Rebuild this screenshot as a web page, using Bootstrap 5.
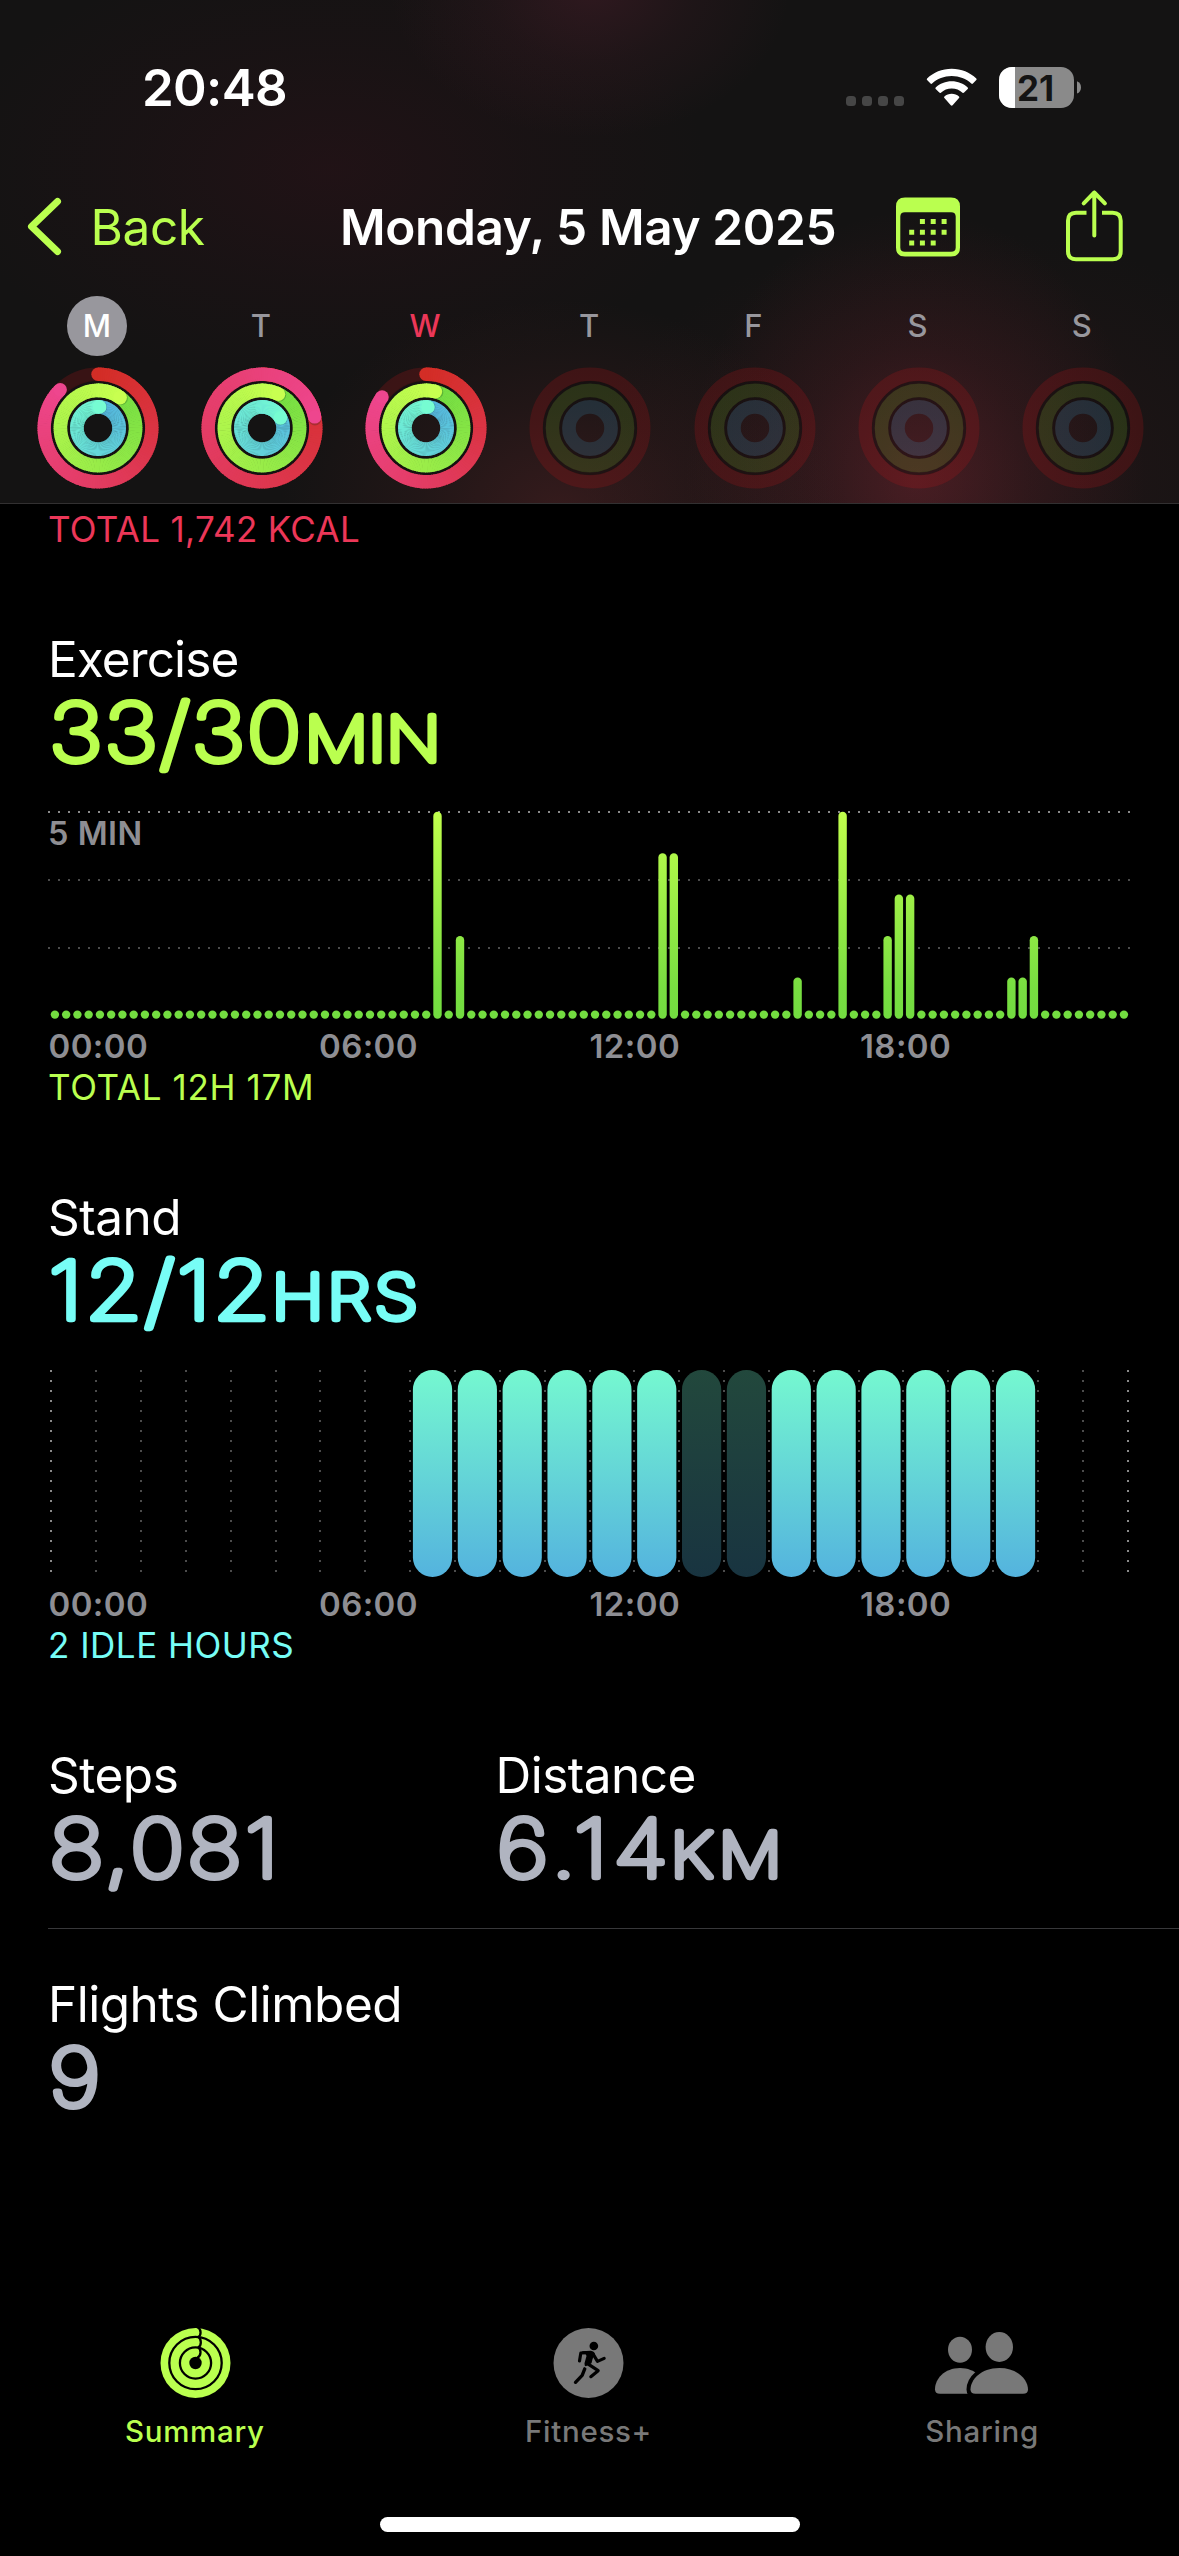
<!DOCTYPE html>
<html lang="en" data-bs-theme="dark">
<head>
<meta charset="utf-8">
<meta name="viewport" content="width=device-width, initial-scale=1">
<title>Fitness – Summary</title>
<link href="https://cdn.jsdelivr.net/npm/bootstrap@5.3.0/dist/css/bootstrap.min.css" rel="stylesheet">
<style>
  :root { --lime:#baff4f; --aqua:#77fdf6; --rose:#ec3758; --dim:#8e8e93; }
  body { width:1179px; height:2556px; background:#000; color:#fff; font-family:Inter,"Liberation Sans",sans-serif; overflow:hidden; }
  svg { display:block; flex:none; overflow:visible; }
  .top-pane { height:504px; border-bottom:1px solid #323031;
    background:
      radial-gradient(200px 150px at 590px -12px, rgba(125,40,65,.26), rgba(125,40,65,.1) 50%, transparent),
      radial-gradient(380px 220px at 330px 170px, rgba(90,15,35,.18), rgba(90,15,35,.08) 50%, transparent),
      radial-gradient(280px 210px at 560px 510px, rgba(130,45,50,.3), rgba(130,45,50,.12) 50%, transparent),
      radial-gradient(230px 270px at 915px 480px, rgba(150,45,60,.33), rgba(140,40,55,.14) 50%, transparent),
      radial-gradient(380px 250px at 960px 480px, rgba(80,30,35,.24), transparent),
      #141313; }
  .status-row { height:176px; padding-left:142px; }
  .clock { width:704px; font-size:51px; font-weight:600; letter-spacing:-.66px; line-height:60px; }
  .title-row { height:101px; padding-left:28px; color:var(--lime); }
  .back-link { width:312px; color:var(--lime); font-size:49.5px; line-height:60px; letter-spacing:-.4px; }
  .day-title { width:556px; color:#fff; font-size:49.5px; font-weight:600; line-height:60px; letter-spacing:-.36px; white-space:nowrap; }
  .week-row { padding:19px 14px 0 16px; }
  .day-letter { width:60px; height:60px; margin-left:-2.500px; font-size:31px; font-weight:500; color:#98979d; }
  .day-letter.chosen { background:#98979d; color:#fff; }
  .day-letter.today { color:var(--rose); }
  .content-pane { padding:5px 0 0 48px; }
  .foot-line { font-size:35px; line-height:40px; }
  .metric-name { font-size:49.5px; font-weight:400; line-height:60px; letter-spacing:-.5px; margin:0; }
  .block-gap { margin-top:80px; }
  .figure-text { font-family:Inter,sans-serif; font-weight:100; font-size:79.500px; stroke-width:6.500px; stroke-linejoin:round; stroke-linecap:round; }
  .figure-text .unit { font-size:61.500px; }
  .plot { margin:32px 0 8px; }
  .tick-row { padding-left:.5px; color:var(--dim); font-size:33px; font-weight:600; line-height:38px; padding-bottom:2px; letter-spacing:.4px; }
  .tick-row span { width:270.5px; }
  .lime { color:var(--lime); } .aqua { color:var(--aqua); } .rose { color:var(--rose); }
  .rule-line { height:1px; background:#38383a; margin:33px 0 45px; }
  .tab-pane-bar { height:246px; padding-top:13px; }
  .tab-items { margin-left:-2px; }
  .tab-name { font-size:29.5px; font-weight:500; line-height:40px; letter-spacing:.7px; margin-top:8px; }
  .tab-off { color:#787878; }
  .home-bar { width:420px; height:15px; border-radius:8px; background:#fff; margin:66px auto 0; }
</style>
<script src="https://cdn.jsdelivr.net/npm/bootstrap@5.3.0/dist/js/bootstrap.bundle.min.js"></script>
</head>
<body class="d-flex flex-column m-0">

<header class="top-pane flex-shrink-0">
  <div class="status-row d-flex align-items-center">
    <div class="clock"><span class="d-block">20:48</span></div>
    <svg width="240" height="44" viewBox="0 0 240 44">
      <g fill="#464646"><rect x="0" y="30" width="10" height="10" rx="3.5"/><rect x="16" y="30" width="10" height="10" rx="3.5"/><rect x="32" y="30" width="10" height="10" rx="3.5"/><rect x="48" y="30" width="10" height="10" rx="3.5"/></g>
      <g fill="#fff">
        <path d="M105.7 2.7C115.300 2.700 124 6.400 130.300 12.400Q131.100 13.200 130.300 14L126.900 17.500Q126.100 18.300 125.300 17.500C120.200 12.800 113.300 10 105.700 10S91.200 12.800 86.100 17.500Q85.300 18.300 84.500 17.500L81.100 14Q80.300 13.200 81.100 12.400C87.400 6.400 96.100 2.700 105.700 2.700Z"/>
        <path d="M105.700 15.200C111.900 15.200 117.500 17.500 121.700 21.400Q122.500 22.200 121.700 23L118.100 26.600Q117.300 27.400 116.500 26.700C113.600 24.100 109.900 22.500 105.700 22.500S97.800 24.100 94.900 26.700Q94.100 27.400 93.300 26.600L89.700 23Q88.900 22.200 89.700 21.400C93.900 17.500 99.500 15.200 105.700 15.200Z"/>
        <path d="M105.700 27.800C108.500 27.800 111 28.700 113 30.400Q113.800 31.200 113 32L106.600 39.300Q105.700 40.200 104.800 39.300L98.400 32Q97.600 31.200 98.400 30.400C100.400 28.700 102.900 27.800 105.700 27.800Z"/>
      </g>
      <clipPath id="cell"><rect x="153" y="1" width="75" height="41" rx="13"/></clipPath>
      <g clip-path="url(#cell)"><rect x="153" y="1" width="75" height="41" fill="#8a8a8a"/><rect x="153" y="1" width="16" height="41" fill="#fff"/></g>
      <path d="M231 15.300C233.500 16.300 235 18.500 235 21.400S233.500 26.500 231 27.500Z" fill="#8a8a8a"/>
      <text x="171" y="34.600" font-size="35" font-weight="700" fill="#141414">21</text>
    </svg>
  </div>

  <div class="title-row d-flex align-items-center">
    <a href="#" class="back-link d-flex align-items-center text-decoration-none">
      <svg width="33" height="57" viewBox="0 0 33 57" fill="none" stroke="currentColor" stroke-width="7" stroke-linecap="round" stroke-linejoin="round"><path d="M29.500 3.500 3.500 28.500 29.500 53.500"/></svg>
      <span style="margin-left:29.5px">Back</span>
    </a>
    <h1 class="day-title m-0">Monday, 5 May 2025</h1>
    <svg width="64" height="60" viewBox="0 0 64 60" fill="currentColor">
      <path fill-rule="evenodd" d="M9 .500H55Q64 .500 64 9.500V50.500Q64 59.500 55 59.500H9Q0 59.500 0 50.500V9.500Q0 .500 9 .500ZM9 15.200Q4.300 15.200 4.300 19.500V50.500Q4.300 54.800 9 54.800H55Q59.700 54.800 59.700 50.500V19.500Q59.700 15.200 55 15.200Z"/>
      <path d="M23.900 22h5v5h-5zM34.700 22h5v5h-5zM45.600 22h5v5h-5zM13.200 32.700h5v5h-5zM23.900 32.700h5v5h-5zM34.700 32.700h5v5h-5zM45.600 32.700h5v5h-5zM13.200 43.400h5v5h-5zM23.900 43.400h5v5h-5zM34.700 43.400h5v5h-5z"/>
    </svg>
    <svg style="margin-left:106px" width="57" height="74" viewBox="0 2 57 74" fill="none" stroke="currentColor" stroke-width="4">
      <path d="M20.500 24.800H10Q2 24.800 2 32.800V63.300Q2 71.300 10 71.300H46.700Q54.700 71.300 54.700 63.300V32.800Q54.700 24.800 46.700 24.800H36"/>
      <path stroke-linecap="round" stroke-linejoin="round" d="M28.300 47.500V4.500M17.700 15.300 28.300 4.500 38.900 15.300"/>
    </svg>
  </div>

  <div class="week-row d-flex" id="week"></div>
</header>

<main class="content-pane flex-grow-1">
  <div class="foot-line rose" style="letter-spacing:.3px">TOTAL 1,742 KCAL</div>

  <section class="block-gap">
    <h2 class="metric-name" style="letter-spacing:-.9px">Exercise</h2>
    <svg width="500" height="90"><g transform="scale(1.15 1)" class="lime" fill="currentColor" stroke="currentColor">
      <text class="figure-text" y="72"><tspan x="1" letter-spacing="1.900">33/30</tspan><tspan class="unit" x="223.200" letter-spacing=".300">MIN</tspan></text></g></svg>
    <svg class="plot" id="exercisePlot" width="1131" height="208">
      <defs><linearGradient id="limeFade" gradientUnits="userSpaceOnUse" x1="0" y1="0" x2="0" y2="208"><stop offset="0" stop-color="#c1ff4c"/><stop offset=".850" stop-color="#78de41"/><stop offset="1" stop-color="#72dc40"/></linearGradient></defs>
      <text x="0" y="34" font-size="32.500" font-weight="600" letter-spacing=".500" fill="#8e8e93">5 MIN</text>
    </svg>
    <div class="tick-row d-flex"><span>00:00</span><span>06:00</span><span>12:00</span><span>18:00</span></div>
    <div class="foot-line lime" style="letter-spacing:.65px">TOTAL 12H 17M</div>
  </section>

  <section class="block-gap">
    <h2 class="metric-name">Stand</h2>
    <svg width="500" height="90"><g transform="scale(1.15 1)" class="aqua" fill="currentColor" stroke="currentColor">
      <text class="figure-text" y="72"><tspan x=".700" letter-spacing="2.400">12/12</tspan><tspan class="unit" x="194.500" letter-spacing="3.200">HRS</tspan></text></g></svg>
    <svg class="plot" id="standPlot" width="1131" height="208">
      <defs><linearGradient id="aquaFade" gradientUnits="userSpaceOnUse" x1="0" y1="1" x2="0" y2="208"><stop offset="0" stop-color="#75f8d0"/><stop offset="1" stop-color="#54b3de"/></linearGradient></defs>
    </svg>
    <div class="tick-row d-flex"><span>00:00</span><span>06:00</span><span>12:00</span><span>18:00</span></div>
    <div class="foot-line aqua" style="letter-spacing:.5px">2 IDLE HOURS</div>
  </section>

  <section class="block-gap">
    <div class="d-flex">
      <div style="width:447.5px">
        <h2 class="metric-name">Steps</h2>
        <svg width="400" height="90"><g transform="scale(1.15 1)" fill="#b0b4c0" stroke="#b0b4c0">
          <text class="figure-text" y="72"><tspan x="1" letter-spacing="2.700">8,081</tspan></text></g></svg>
      </div>
      <div>
        <h2 class="metric-name">Distance</h2>
        <svg width="400" height="90"><g transform="scale(1.15 1)" fill="#b0b4c0" stroke="#b0b4c0">
          <text class="figure-text" y="72"><tspan x=".600" letter-spacing="5.200">6.14</tspan><tspan class="unit" x="151.800" letter-spacing="5">KM</tspan></text></g></svg>
      </div>
    </div>
    <div class="rule-line"></div>
    <h2 class="metric-name">Flights Climbed</h2>
    <svg width="400" height="90"><g transform="scale(1.15 1)" fill="#b0b4c0" stroke="#b0b4c0">
      <text class="figure-text" x=".700" y="72">9</text></g></svg>
  </section>
</main>

<nav class="tab-pane-bar flex-shrink-0">
  <div class="tab-items d-flex text-center">
    <div class="w-100 d-flex flex-column align-items-center lime">
      <svg width="110" height="80" viewBox="-55.500 -40 110 80">
        <circle r="35" fill="currentColor"/>
        <g fill="none" stroke="#000" stroke-width="2.300"><circle r="26.200"/><circle r="15.600"/>
          <path d="M2-36C6-33.500 6-27.500 2.500-26M2.500-26.500C6-24 6.500-17.500 2.500-15.500M2.500-16C6-13.500 6-7 1.500-5"/></g>
        <circle r="6.200" fill="#000"/>
      </svg>
      <span class="tab-name">Summary</span>
    </div>
    <div class="w-100 d-flex flex-column align-items-center tab-off">
      <svg width="110" height="80" viewBox="-54.500 -40 110 80">
        <g transform="scale(.3333) translate(-143 -159)">
          <circle cx="143" cy="159" r="105" fill="currentColor"/>
          <circle cx="159" cy="108" r="13"/>
          <path d="M122 123.500 150 122.500Q158 123 162 130L158 140 155 148 152 160 132 170 131 160 137 138 134 131Z"/>
          <g fill="none" stroke="#000" stroke-width="9.500" stroke-linecap="round" stroke-linejoin="round">
            <path d="M116 153 120 129 148 128M156 131 170 154 190 145M140 161 172 182 150 200"/>
            <path d="M104 217 124 196 132 176" stroke-width="10"/>
          </g>
          <path d="M123 164 143 176" stroke="currentColor" stroke-width="3.500"/>
        </g>
      </svg>
      <span class="tab-name">Fitness+</span>
    </div>
    <div class="w-100 d-flex flex-column align-items-center tab-off">
      <svg width="110" height="80" viewBox="-.500 0 110 80" fill="currentColor">
        <ellipse cx="32.500" cy="26.700" rx="12" ry="13"/>
        <path d="M12.500 70.700Q7.500 70.700 7.500 66.200C7.500 56 17 45 32.500 45S57.500 56 57.500 66.200Q57.500 70.700 52.500 70.700Z"/>
        <path stroke="#000" stroke-width="8" d="M48 70.700Q43 70.700 43 66.500C43 57 53 45 71.800 45S100.500 57 100.500 66.500Q100.500 70.700 95.500 70.700Z"/>
        <path d="M48 70.700Q43 70.700 43 66.500C43 57 53 45 71.800 45S100.500 57 100.500 66.500Q100.500 70.700 95.500 70.700Z"/>
        <ellipse cx="71.800" cy="24" rx="13.700" ry="15"/>
      </svg>
      <span class="tab-name">Sharing</span>
    </div>
  </div>
  <div class="home-bar"></div>
</nav>

<script>
  const NS = 'http://www.w3.org/2000/svg';
  function shape(parent, name, attrs) {
    const node = document.createElementNS(NS, name);
    for (const key in attrs) node.setAttribute(key, attrs[key]);
    parent.appendChild(node);
    return node;
  }

  // Week strip: fractions of the move, exercise and stand goals
  const week = [
    { letter:'M', state:'chosen', goals:[.876, 1.1, 1.012] },
    { letter:'T', state:'', goals:[1.217, 1.072, 1.17] },
    { letter:'W', state:'today', goals:[.848, 1.04, 1.015] },
    { letter:'T', state:'' }, { letter:'F', state:'' }, { letter:'S', state:'' }, { letter:'S', state:'' }
  ];
  const rings = [
    { r:53.8, w:13.4, from:[211,45,38], to:[238,70,142], track:'rgba(200,20,25,.2)' },
    { r:37.6, w:13.6, from:[112,220,66], to:[200,255,80], track:'rgba(115,220,40,.15)' },
    { r:21.1, w:13.7, from:[84,180,224], to:[118,252,210], track:'rgba(60,180,230,.16)' }
  ];
  const mix = (a, b, t) => 'rgb(' + a.map((v, i) => Math.round(v + (b[i] - v) * t)).join(',') + ')';
  const spot = (r, t) => [r * Math.sin(t * 2 * Math.PI), -r * Math.cos(t * 2 * Math.PI)];

  for (const day of week) {
    const cell = document.createElement('div');
    cell.className = 'w-100 d-flex flex-column align-items-center';
    cell.innerHTML = '<div class="day-letter rounded-circle d-flex align-items-center justify-content-center ' + day.state + '">' + day.letter + '</div>';
    const art = shape(cell, 'svg', { width:124, height:124, viewBox:'-62 -62 124 124' });
    art.style.marginTop = '10px';
    const gap = day.goals ? { fill:'none', stroke:'#151112', 'stroke-width':4 } : { fill:'none', stroke:'rgba(10,8,8,.35)', 'stroke-width':3 };
    shape(art, 'circle', { r:45.7, ...gap });
    shape(art, 'circle', { r:29.4, ...gap });
    rings.forEach((ring, i) => {
      shape(art, 'circle', { r:ring.r, fill:'none', stroke:ring.track, 'stroke-width':ring.w });
      if (!day.goals) return;
      const goal = day.goals[i], steps = Math.round(goal * 150);
      const start = spot(ring.r, 0);
      shape(art, 'circle', { cx:start[0], cy:start[1], r:ring.w / 2, fill:mix(ring.from, ring.to, 0) });
      const end = spot(ring.r, goal);
      const tail = steps - 8;
      for (let s = 0; s < steps; s++) {
        if (s === tail && goal > 1) {
          const ahead = spot(ring.r, goal + .006);
          shape(art, 'circle', { cx:ahead[0], cy:ahead[1], r:ring.w / 2 - .2, fill:'rgba(0,30,20,.22)' });
        }
        const a = spot(ring.r, goal * s / steps), b = spot(ring.r, goal * Math.min(s + 1.35, steps) / steps);
        shape(art, 'path', { d:`M${a} A${ring.r} ${ring.r} 0 0 1 ${b}`, fill:'none', stroke:mix(ring.from, ring.to, s / steps), 'stroke-width':ring.w });
      }
      shape(art, 'circle', { cx:end[0], cy:end[1], r:ring.w / 2, fill:mix(ring.from, ring.to, 1) });
    });
    document.getElementById('week').appendChild(cell);
  }

  // Exercise minutes per quarter hour
  const minutes = { 34:5, 36:2, 54:4, 55:4, 66:1, 70:5, 74:2, 75:3, 76:3, 85:1, 86:1, 87:2 };
  const exercise = document.getElementById('exercisePlot');
  [[0, '#8a8a8a'], [68, '#4c4c4c'], [136, '#4c4c4c']].forEach(([y, tone]) => {
    for (let x = 0; x <= 1080; x += 10) shape(exercise, 'rect', { x, y, width:2, height:2, fill:tone });
  });
  for (let q = 0; q < 96; q++) {
    const h = minutes[q] ? 207 * minutes[q] / 5 : 8.4;
    shape(exercise, 'rect', { x:6.9 + q * 11.253 - 4.2, y:207.8 - h, width:8.4, height:h, rx:4.2, fill:'url(#limeFade)' });
  }

  // Hours stood, with idle hours faded
  const stand = document.getElementById('standPlot');
  for (let h = 0; h <= 24; h++) {
    for (let y = 1; y <= 201; y += 10)
      shape(stand, 'rect', { x:Math.round(2.3 + h * 44.85), y, width:2, height:2, fill:h % 24 ? '#4c4c4c' : '#8a8a8a' });
  }
  for (let h = 8; h < 22; h++) {
    shape(stand, 'rect', { x:3.3 + h * 44.85 + 2.8, y:1, width:39.2, height:207, rx:19.6, fill:'url(#aquaFade)', opacity:(h === 14 || h === 15) ? .29 : 1 });
  }
</script>
</body>
</html>
